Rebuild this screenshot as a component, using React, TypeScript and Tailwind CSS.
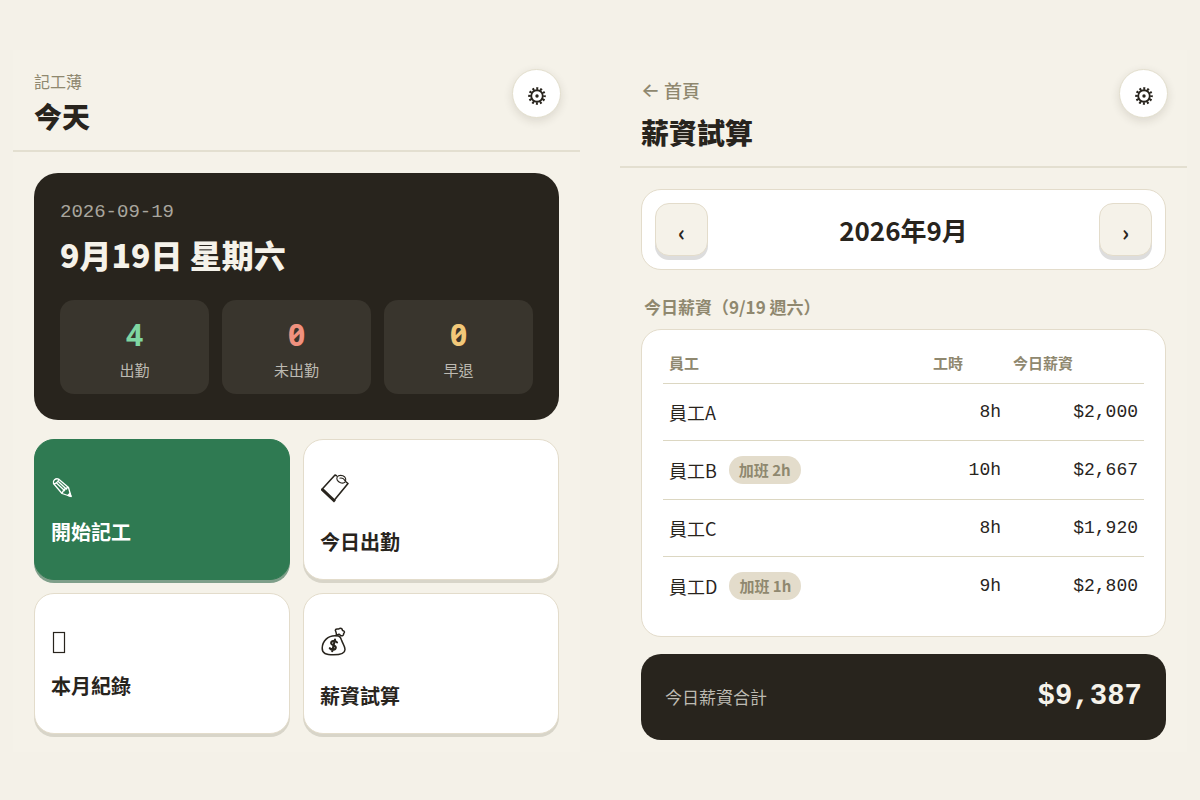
import { clsx } from "clsx";
import type { ReactNode } from "react";

const stats = [
  { label: "出勤", value: 4, color: "text-[#7fd6a2]" },
  { label: "未出勤", value: 0, color: "text-[#f0917e]" },
  { label: "早退", value: 0, color: "text-[#f2c879]" },
];

const wages = [
  { name: "員工A", overtime: 0, hours: 8, pay: 2000 },
  { name: "員工B", overtime: 2, hours: 10, pay: 2667 },
  { name: "員工C", overtime: 0, hours: 8, pay: 1920 },
  { name: "員工D", overtime: 1, hours: 9, pay: 2800 },
];

const money = (n: number) => `$${n.toLocaleString("en-US")}`;

const mono = "font-['Liberation_Mono',monospace]";

function GearIcon() {
  return (
    <svg viewBox="0 0 24 24" className="h-6 w-6" fill="none" stroke="currentColor" aria-hidden="true">
      <circle cx="12" cy="12" r="5.8" strokeWidth="1.9" />
      <circle cx="12" cy="12" r="7.5" strokeWidth="2.6" strokeDasharray="2 1.927" strokeDashoffset="1" />
      <circle cx="12" cy="12" r="1.7" fill="currentColor" stroke="none" />
    </svg>
  );
}

function PencilIcon() {
  return (
    <svg viewBox="0 0 32 32" className="h-8 w-8" fill="none" stroke="currentColor" strokeWidth="1.3" strokeLinejoin="round" aria-hidden="true">
      <path d="M2.5 11.5 C1.5 8.5 4.5 6 7.5 7 L17.5 15.5 L20 24.5 L11 21.5 Z" />
      <path d="M2.5 11.5 C4 12.5 8 9.5 7.5 7 M5 10.5 L14 19 M7 9.2 L15.8 17.4 M11 21.5 C12 18.5 14.5 16 17.5 15.5" />
      <path d="M20 24.5 L16.8 23.4 L19 21.2 Z" fill="currentColor" />
    </svg>
  );
}

function ClipboardIcon() {
  return (
    <svg viewBox="0 0 32 32" className="h-8 w-8" fill="none" stroke="currentColor" strokeWidth="1.6" strokeLinejoin="round" aria-hidden="true">
      <path d="M17 4 L15 3 L1.8 17.5 L14 28.5 L28 11.5 L25.5 9.5" />
      <path d="M1.2 16.8 L1.2 18.6 L14 30.4 L15.8 28.6 L14 26.4 L3.5 16.6 Z" fill="currentColor" stroke="none" />
      <path d="M17.2 5 C18.5 2.8 22.5 2.8 24.8 5 C26.2 6.8 26 9.5 24.4 10.6 C22 12 18.8 10.6 17.4 8.4 C16.7 7.2 16.7 6 17.2 5 Z M19.5 6.2 C21.5 5.8 24 6.8 25 8.8" strokeWidth="1.1" />
    </svg>
  );
}

function MoneyBagIcon() {
  return (
    <svg viewBox="0 0 32 32" className="h-8 w-8" fill="none" stroke="currentColor" strokeWidth="1.5" strokeLinecap="round" strokeLinejoin="round" aria-hidden="true">
      <path d="M15.5 9.8 C8 9.5 2.5 15 2.2 22 C2 27.5 6 28.8 13.5 28.8 C21 28.8 25 27.5 25 23.5 C25 20 22.5 17.5 21.5 14 C21 12 20 10.5 18.5 10 Z" />
      <path d="M16 9.4 C17 8.5 16 6 15.3 4.2 C15.5 2 17.8 3.4 18.8 2.8 C20.5 1.8 22.5 2.5 22.5 4.5 C25 5 24.8 6.5 23.6 7.5 C24 9.4 22.5 10 21 9.8 M17 9 L19 8.2 L21 9.8" />
      <path d="M17 16.4 C14.5 13.6 10.8 14.8 11.2 17.6 C11.6 19.6 16 18.8 15.8 21.6 C15.4 24.4 11.5 24.2 9.8 22.2 M15 13.6 L12.2 25.2" strokeWidth="2.1" />
    </svg>
  );
}

function CalendarIcon() {
  return (
    <svg viewBox="0 0 32 32" className="h-8 w-8" fill="none" stroke="currentColor" aria-hidden="true">
      <rect x="2.5" y="6.5" width="11" height="20" strokeWidth="1.2" />
    </svg>
  );
}

const tiles = [
  { label: "開始記工", icon: PencilIcon, primary: true, tall: false },
  { label: "今日出勤", icon: ClipboardIcon, primary: false, tall: true },
  { label: "本月紀錄", icon: CalendarIcon, primary: false, tall: false },
  { label: "薪資試算", icon: MoneyBagIcon, primary: false, tall: true },
];

function ScreenHeader({ title, children }: { title: string; children: ReactNode }) {
  return (
    <header className="flex items-start justify-between border-b-2 border-[#e3dfd0] pt-[19px] pr-[19px] pb-[14px] pl-[21px]">
      <div>
        {children}
        <h1 className="text-[28px] leading-10 font-black">{title}</h1>
      </div>
      <button
        type="button"
        aria-label="設定"
        className="flex h-[49px] w-[49px] shrink-0 items-center justify-center rounded-full border border-[#e3dfce] bg-white pt-1 shadow-[0_3px_10px_rgba(40,36,20,0.12)]"
      >
        <GearIcon />
      </button>
    </header>
  );
}

function MonthButton({ label, children }: { label: string; children: ReactNode }) {
  return (
    <button
      type="button"
      aria-label={label}
      className="h-[53px] w-[53px] rounded-[14px] border border-[#e3dccb] bg-[#f5f2e9] pt-1 text-[22px] font-bold shadow-[0_4px_0_#dddddd]"
    >
      {children}
    </button>
  );
}

function TodayScreen() {
  return (
    <section className="bg-[#f5f2e9]">
      <ScreenHeader title="今天">
        <p className="mb-[3px] text-[16px] leading-6 text-[#8f886f]">記工薄</p>
      </ScreenHeader>

      <div className="px-[21px] pt-[21px] pb-4">
        {/* Day summary */}
        <div className="rounded-[24px] bg-[#28241d] p-[26px] text-[#f5f2ea]">
          <p className={clsx(mono, "text-[19px] leading-[26px] text-[#a9a69e]")}>2026-09-19</p>
          <h2 className="mt-[5px] text-[32px] leading-[48px] font-black">9月19日 星期六</h2>
          <div className="mt-[22px] grid grid-cols-3 gap-[13px]">
            {stats.map((s) => (
              <div key={s.label} className="rounded-[14px] bg-[#39352d] py-3 text-center">
                <p className={clsx("font-['Noto_Sans',sans-serif] text-[30px] leading-[46px] font-bold slashed-zero", s.color)}>
                  {s.value}
                </p>
                <p className="text-[15px] leading-6 text-[#bdbab2]">{s.label}</p>
              </div>
            ))}
          </div>
        </div>

        {/* Shortcuts */}
        <nav className="mt-[19px] grid grid-cols-2 gap-[13px]">
          {tiles.map((t) => (
            <button
              key={t.label}
              type="button"
              className={clsx(
                "flex flex-col items-start rounded-[20px] border px-4 pt-[26px] pb-[21px] text-left",
                t.primary
                  ? "border-[#2f7a52] bg-[#2f7a52] text-white shadow-[0_3px_0_#7f9f8a]"
                  : "border-[#e3dccb] bg-white shadow-[0_3px_0_#d8d5c9]",
              )}
            >
              <span className={clsx("flex h-11 items-center", t.tall ? "mb-4" : "mb-[6px]")}>
                <t.icon />
              </span>
              <span className="text-[20px] leading-8 font-bold">{t.label}</span>
            </button>
          ))}
        </nav>
      </div>
    </section>
  );
}

function PayrollScreen() {
  const total = wages.reduce((sum, w) => sum + w.pay, 0);

  return (
    <section className="bg-[#f5f2e9]">
      <ScreenHeader title="薪資試算">
        <a href="#" className="mb-px flex h-[42px] items-center gap-1 text-[18px] font-medium text-[#8f886f]">
          <span className="font-['Inter',sans-serif] text-[20px]">←</span>
          首頁
        </a>
      </ScreenHeader>

      <div className="px-[21px] pt-[21px] pb-3">
        <div className="flex items-center justify-between rounded-[20px] border border-[#e3dccb] bg-white p-[13px]">
          <MonthButton label="上個月">‹</MonthButton>
          <h2 className="text-[26px] leading-10 font-bold">2026年9月</h2>
          <MonthButton label="下個月">›</MonthButton>
        </div>

        <h3 className="mt-[23px] mb-2 pl-[3px] text-[17px] leading-7 font-bold text-[#8f886f]">
          今日薪資（9/19 週六）
        </h3>

        <div className="rounded-[20px] border border-[#e3dccb] bg-white p-[21px]">
          <table className="w-full table-fixed border-collapse">
            <thead>
              <tr className="border-b border-[#dcd7c2] text-left text-[15px] leading-6 text-[#8f886f]">
                <th className="px-[6px] pb-2 font-bold">員工</th>
                <th className="w-20 px-[6px] pb-2 font-bold">工時</th>
                <th className="w-[137px] px-[6px] pb-2 font-bold">今日薪資</th>
              </tr>
            </thead>
            <tbody>
              {wages.map((w) => (
                <tr key={w.name} className="border-b border-[#dcd7c2] text-[18px] leading-7 last:border-b-0">
                  <td className="px-[6px] py-[14px]">
                    <div className="flex items-center gap-3">
                      {w.name}
                      {w.overtime > 0 && (
                        <span className="my-px rounded-full bg-[#e3dccb] px-[10px] text-[15px] font-bold text-[#8f886f]">
                          加班 {w.overtime}h
                        </span>
                      )}
                    </div>
                  </td>
                  <td className={clsx(mono, "px-[6px] text-right")}>{w.hours}h</td>
                  <td className={clsx(mono, "px-[6px] text-right")}>{money(w.pay)}</td>
                </tr>
              ))}
            </tbody>
          </table>
        </div>

        <div className="mt-[17px] flex items-center justify-between rounded-[20px] bg-[#28241d] px-6 py-[22px]">
          <span className="text-[17px] text-[#bdbab2]">今日薪資合計</span>
          <span className={clsx(mono, "text-[29px] leading-[42px] font-bold text-[#f5f2ea]")}>{money(total)}</span>
        </div>
      </div>
    </section>
  );
}

export default function App() {
  return (
    <main className="grid min-h-screen grid-cols-2 content-start gap-10 bg-[#f4f1e8] px-[13px] py-[50px] font-['Noto_Sans_CJK_TC',sans-serif] text-[#28241d]">
      <TodayScreen />
      <PayrollScreen />
    </main>
  );
}
